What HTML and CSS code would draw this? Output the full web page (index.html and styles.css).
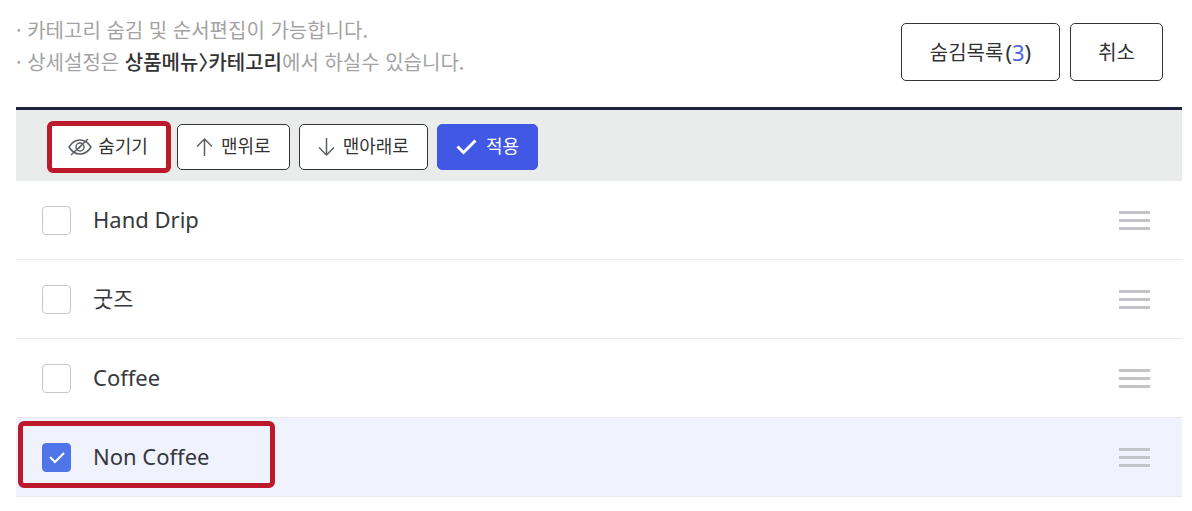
FILE: index.html
```html
<!DOCTYPE html>
<html lang="ko">
<head>
<meta charset="utf-8">
<meta name="viewport" content="width=device-width, initial-scale=1">
<title>카테고리 편집</title>
<link rel="stylesheet" href="styles.css">
</head>
<body>
<main class="page">
  <header class="header">
    <ul class="notes">
      <li>· 카테고리 숨김 및 순서편집이 가능합니다.</li>
      <li>· 상세설정은 <strong class="path">상품메뉴〉카테고리</strong>에서 하실수 있습니다.</li>
    </ul>
    <div class="actions">
      <button type="button" class="btn btn-large btn-list"><span>숨김목록</span><span class="paren">(<span class="count">3</span>)</span></button>
      <button type="button" class="btn btn-large"><span>취소</span></button>
    </div>
  </header>

  <section class="panel">
    <div class="toolbar">
      <div class="marked">
        <button type="button" class="btn btn-hide">
          <svg class="icon" width="24" height="20" viewBox="0 0 24 20" aria-hidden="true"><path d="M1 10C4 5 8 3 12 3s8 2 11 7c-3 5-7 7-11 7S4 15 1 10z"/><circle cx="12" cy="10" r="4"/><path d="M3 18 20 2M10 12l4-4"/></svg>
          <span>숨기기</span>
        </button>
        <span class="mark mark-button"></span>
      </div>
      <button type="button" class="btn btn-up">
        <svg class="icon" width="17" height="20" viewBox="0 0 17 20" aria-hidden="true"><path d="M8.500 19V2M1 9.500l7.500-7.500 7.500 7.500"/></svg>
        <span>맨위로</span>
      </button>
      <button type="button" class="btn btn-down">
        <svg class="icon" width="17" height="20" viewBox="0 0 17 20" aria-hidden="true"><path d="M8.500 1v17M1 10.500l7.500 7.500 7.500-7.500"/></svg>
        <span>맨아래로</span>
      </button>
      <button type="button" class="btn btn-apply">
        <svg class="icon icon-apply" width="21" height="20" viewBox="0 0 21 20" aria-hidden="true"><path d="M1.500 9.500l6 6 12-12"/></svg>
        <span>적용</span>
      </button>
    </div>

    <ul class="rows">
      <li class="row">
        <label class="item"><input type="checkbox" class="check"><span class="name">Hand Drip</span></label>
        <button type="button" class="handle" aria-label="Hand Drip 순서 변경"><span class="bar"></span><span class="bar"></span><span class="bar"></span></button>
      </li>
      <li class="row">
        <label class="item"><input type="checkbox" class="check"><span class="name">굿즈</span></label>
        <button type="button" class="handle" aria-label="굿즈 순서 변경"><span class="bar"></span><span class="bar"></span><span class="bar"></span></button>
      </li>
      <li class="row">
        <label class="item"><input type="checkbox" class="check"><span class="name">Coffee</span></label>
        <button type="button" class="handle" aria-label="Coffee 순서 변경"><span class="bar"></span><span class="bar"></span><span class="bar"></span></button>
      </li>
      <li class="row row-selected">
        <label class="item"><span class="checkwrap"><input type="checkbox" class="check" checked><svg class="tick" width="29" height="28" viewBox="0 0 29 28" aria-hidden="true"><path d="M8 14l5 5 9-9"/></svg></span><span class="name">Non Coffee</span></label>
        <button type="button" class="handle" aria-label="Non Coffee 순서 변경"><span class="bar"></span><span class="bar"></span><span class="bar"></span></button>
        <span class="mark mark-row"></span>
      </li>
    </ul>
  </section>
</main>
</body>
</html>
```

FILE: styles.css
```css
* {
  box-sizing: border-box;
}

body {
  margin: 0;
  background: #fff;
  color: #36383c;
  font-family: "Noto Sans", "Noto Sans CJK KR", sans-serif;
}

.page {
  padding: 14px 10px 14px 16px;
}

.header {
  display: flex;
  justify-content: space-between;
  align-items: flex-start;
  padding-bottom: 26px;
}

.notes,
.rows {
  list-style: none;
  margin: 0;
  padding: 0;
}

.notes {
  color: #a3a3a3;
  font-family: "Noto Sans CJK KR", sans-serif;
  font-size: 20px;
  line-height: 32px;
}

.path {
  color: #333;
  font-weight: 500;
  font-feature-settings: "halt";
}

.actions {
  display: flex;
  gap: 10px;
  padding: 9px 19px 0 0;
}

.btn {
  display: flex;
  align-items: center;
  justify-content: center;
  gap: 8px;
  height: 46px;
  margin: 0;
  padding: 0 18px;
  border: 1px solid #333;
  border-radius: 5px;
  background: #fff;
  color: #333;
  font-family: "Noto Sans CJK KR", sans-serif;
  font-size: 18px;
  line-height: 24px;
  white-space: nowrap;
}

.btn span {
  padding-bottom: 4px;
}

.btn-large {
  gap: 2px;
  height: 58px;
  padding: 0 27px;
  font-size: 20px;
}

.btn-list {
  padding: 0 28px;
}

.btn-large span {
  padding-bottom: 0;
}

.btn .paren {
  font-family: "Noto Sans", sans-serif;
  font-size: 22px;
}

.count {
  color: #4a68e0;
}

.toolbar {
  display: flex;
  align-items: center;
  gap: 9px;
  padding: 14px 30px 11px 34px;
  border-top: 3px solid #20233a;
  background: #eaecec;
}

.marked {
  position: relative;
  margin-right: -2px;
}

.mark {
  position: absolute;
  border: 5px solid #bc1a2a;
  border-radius: 6px;
  pointer-events: none;
}

.mark-button {
  inset: -3px -1px -3px -3px;
}

.mark-row {
  top: 3px;
  bottom: 8px;
  left: 2px;
  width: 257px;
}

.btn-hide {
  gap: 6px;
  width: 120px;
  padding: 0 20px 0 16px;
}

.btn-apply {
  gap: 9px;
  border-color: #4058e4;
  background: #4058e4;
  color: #fff;
}

.icon {
  flex: none;
  fill: none;
  stroke: #5c6066;
  stroke-width: 1.5;
}

.icon-apply {
  stroke: #fff;
  stroke-width: 3;
}

.row {
  position: relative;
  display: flex;
  align-items: center;
  justify-content: space-between;
  padding: 25px 32px 24px 26px;
  border-bottom: 1px solid #e9e9eb;
}

.row-selected {
  background: #f0f3fe;
}

.item {
  display: flex;
  align-items: center;
  gap: 22px;
  font-size: 22px;
  line-height: 26px;
}

.name {
  padding-bottom: 3px;
}

.check {
  display: block;
  appearance: none;
  width: 29px;
  height: 29px;
  margin: 0;
  border: 1px solid #c8c8ca;
  border-radius: 4px;
  background: #fff;
}

.check:checked {
  border-color: #4f75e8;
  background: #4f75e8;
}

.checkwrap {
  position: relative;
}

.tick {
  position: absolute;
  inset: 0;
  fill: none;
  stroke: #fff;
  stroke-width: 2;
}

.handle {
  display: flex;
  flex-direction: column;
  gap: 5px;
  padding: 0;
  border: 0;
  background: none;
}

.bar {
  width: 31px;
  height: 3px;
  background: #c3c4c7;
}
```
